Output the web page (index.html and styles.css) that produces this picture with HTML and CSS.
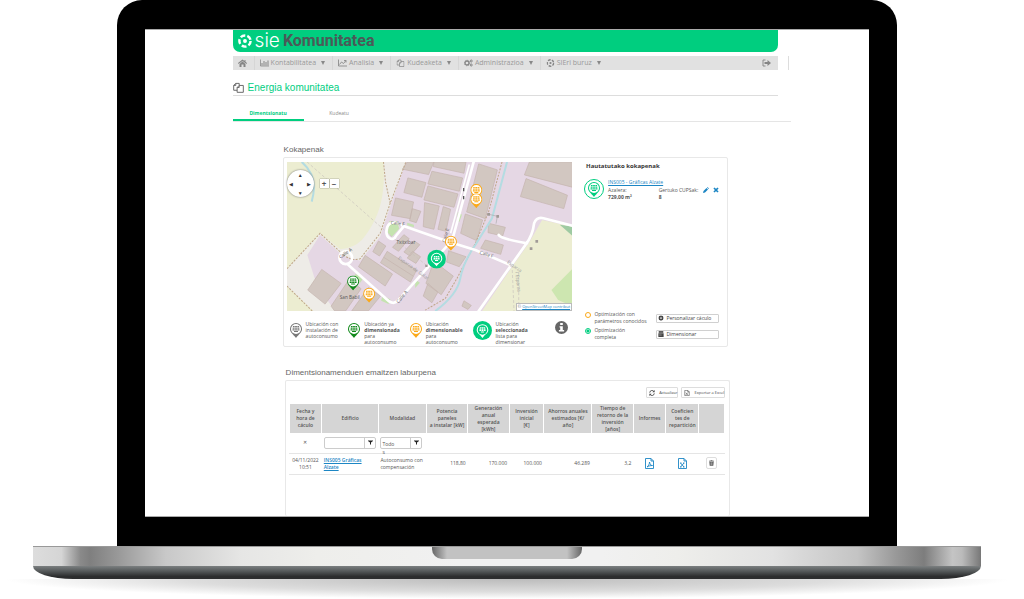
FILE: index.html
```html
<!DOCTYPE html>
<html lang="eu">
  <head>
    <meta charset="UTF-8" />
    <meta name="viewport" content="width=device-width, initial-scale=1" />
    <title>SIE Komunitatea</title>
    <link rel="stylesheet" href="styles.css" />
  </head>
  <body>
    <!-- shared icons -->
    <svg class="sprite" aria-hidden="true">
      <symbol id="i-pin" viewBox="0 0 24 30">
        <path d="M12 0a12 12 0 0 1 12 12c0 7-6 10-12 18C6 22 0 19 0 12A12 12 0 0 1 12 0z" fill="currentColor" />
        <circle cx="12" cy="12" r="10" fill="#fff" />
        <path d="M6 6h12l1 9H5zM8 16h8v2H8z" fill="currentColor" />
        <path d="M5 9h14M5 12h14M9.500 6v9M14.500 6v9" stroke="#fff" stroke-width="1" fill="none" />
      </symbol>
      <symbol id="i-pin-big" viewBox="0 0 36 36">
        <circle cx="18" cy="18" r="18" fill="currentColor" />
        <path d="M18 6a11 11 0 0 1 11 11c0 6-6 8-11 15C13 25 7 23 7 17A11 11 0 0 1 18 6z" fill="#fff" />
        <circle cx="18" cy="17" r="9" fill="currentColor" />
        <path d="M13 12h10l1 7H12zM15 20h6v2h-6z" fill="#fff" />
        <path d="M12 15h12M16 12v7M20 12v7" stroke="currentColor" fill="none" />
      </symbol>
      <symbol id="i-copy" viewBox="0 0 16 16">
        <path d="M6 12H1V5l3-3h5v3M1 5h3V2M6 8l3-3h6v10H6zM6 8h3V5" fill="none" stroke="currentColor" stroke-width="1.4" stroke-linejoin="round" />
      </symbol>
      <symbol id="i-filter" viewBox="0 0 10 10">
        <path d="M0 1h10v1L6 5v5L4 8V5L0 2z" fill="currentColor" />
      </symbol>
      <symbol id="i-ring" viewBox="0 0 20 20">
        <circle cx="10" cy="10" r="8" fill="none" stroke="currentColor" stroke-width="3.500" stroke-dasharray="7 3.050" />
        <circle cx="10" cy="10" r="2.800" fill="currentColor" />
      </symbol>
      <symbol id="i-gear" viewBox="0 0 16 16">
        <path d="M8 1v14M1 8h14M3 3l10 10M13 3L3 13" stroke="currentColor" stroke-width="3.200" />
        <circle cx="8" cy="8" r="4" fill="none" stroke="currentColor" stroke-width="3" />
        <circle cx="8" cy="8" r="2.300" fill="#fff" />
      </symbol>
    </svg>

    <div class="laptop">
      <div class="lid">
        <div class="screen">
          <header class="brand">
            <svg class="brand-icon"><use href="#i-ring" /></svg>
            <span class="brand-sie">sie</span>
            <span class="brand-name">Komunitatea</span>
          </header>

          <div class="menu-row">
            <nav class="menu">
              <a href="#" aria-label="Hasiera" class="home">
                <svg viewBox="0 0 18 16"><path d="M9 1l9 7-1 2-8-6-8 6-1-2zM13 2h2v4l-2-2zM9 5l6 5v6h-4v-5H7v5H3v-6z" fill="currentColor" /></svg>
              </a>
              <a href="#">
                <svg viewBox="0 0 18 16"><path d="M1 1v13h17" stroke="currentColor" stroke-width="1.500" fill="none" /><path d="M3 8h2v5H3zM7 4h2v9H7zM11 6h2v7h-2zM15 3h2v10h-2z" fill="currentColor" /></svg>
                Kontabilitatea <span class="caret"></span>
              </a>
              <a href="#">
                <svg viewBox="0 0 18 16"><path d="M1 1v13h17M3 11l4-5 4 3 5-6M12 3h4v4" stroke="currentColor" stroke-width="1.700" fill="none" /></svg>
                Analisia <span class="caret"></span>
              </a>
              <a href="#">
                <svg viewBox="0 0 16 16"><use href="#i-copy" /></svg>
                Kudeaketa <span class="caret"></span>
              </a>
              <a href="#">
                <svg viewBox="0 0 18 16">
                  <circle cx="6" cy="8" r="4" fill="none" stroke="currentColor" stroke-width="2.600" />
                  <circle cx="6" cy="8" r="5.500" fill="none" stroke="currentColor" stroke-width="1.500" stroke-dasharray="2.200 2.120" />
                  <circle cx="14.500" cy="4" r="2" fill="none" stroke="currentColor" stroke-width="2" />
                  <circle cx="14.500" cy="12" r="2" fill="none" stroke="currentColor" stroke-width="2" />
                </svg>
                Administrazioa <span class="caret"></span>
              </a>
              <a href="#">
                <svg viewBox="0 0 20 20"><use href="#i-ring" /></svg>
                SIEri buruz <span class="caret"></span>
              </a>
              <a href="#" class="logout" aria-label="Irten">
                <svg viewBox="0 0 18 16"><path d="M7 2H2v12h5" stroke="currentColor" stroke-width="1.800" fill="none" /><path d="M5 6h6V2l7 6-7 6v-4H5z" fill="currentColor" /></svg>
              </a>
            </nav>
            <span class="menu-end"></span>
          </div>

          <h1 class="page-title">
            <svg><use href="#i-copy" /></svg>
            Energia komunitatea
          </h1>

          <div class="tabs">
            <a href="#" class="tab active">Dimentsionatu</a>
            <a href="#" class="tab">Kudeatu</a>
          </div>

          <main class="content">
            <h2>Kokapenak</h2>
            <section class="card locations">
              <div class="map-col">
                <div class="map">
                  <svg class="map-canvas" viewBox="0 0 855 447" preserveAspectRatio="xMidYMid slice">
                    <rect width="855" height="447" fill="#e5d7e4" />
                    <path d="M0 0H356L309 134 279 224 219 296 165 280 99 219 61 279 89 369 144 447H0z" fill="#eeece7" />
                    <path d="M0 0H289C294 84 286 160 224 234Q200 258 160 262L99 214 0 320z" fill="#ecedd1" />
                    <path d="M0 372L80 447H0z" fill="#ecedd1" />
                    <path d="M764 174L855 194V447H584L674 314 724 244z" fill="#ecedd1" />
                    <path d="M792 384L855 320V432L812 414z" fill="#cde6b0" />
                    <path d="M817 188L855 194V222z" fill="#9fcaa2" />
                    <path d="M306 178h24l6 22-22 24-12-12zM360 182l20 6v8l-20-6zM205 336l24 12-10 14-22-14zM286 400l24 12-6 14-22-10zM384 352l14 10-14 16zM512 150l12 8-8 22-8-4z" fill="#c5e3b0" />

                    <!-- buildings -->
                    <g fill="#d2c7c1" stroke="#c4b4ad" stroke-width="2">
                      <path d="M360 0h80l-16 38-78-16zM440 0h96l-6 34-92-20zM434 28l92 20-10 40-94-22zM422 72l90 24-12 40-90-22zM362 48l54 14-12 44-54-14z" />
                      <path d="M325 108l54 12-10 50-56-10zM375 140l26 8-14 34-20-6zM412 122l44 10-16 70-32-8zM468 134l22 8-14 66-24-6z" />
                      <path d="M574 6l56 18-36 146-56-20zM534 156l52 18-18 62-48-22zM594 234l54 15-8 28-60-18zM604 184l50 12-8 26-44-10z" />
                      <path d="M726 0h129v76L711 39zM716 50l124 50-11 40-130-36z" />
                      <path d="M274 237l22 15-19 30-20-13zM350 218l16 12-32 38-18-12zM380 236l18 12-30 34-18-12zM376 268l24 16-14 20-26-16z" />
                      <path d="M234 280l82 56-22 36-80-58zM300 268l88 56-18 36-90-58zM290 286l88 56" />
                      <path d="M104 322l58 42-48 62-52-42zM186 352l36 28-46 66h-34l-10-14zM244 376l36 26-36 44h-50z" />
                      <path d="M484 266l52 18-20 30-38-14zM440 298l58 44-36 56-46-34zM422 364l30 26-18 32-26-20zM530 416l22 14-10 12-18-10z" />
                    </g>

                    <g fill="none" stroke="#bfa688" stroke-width="3" stroke-dasharray="6 4">
                      <path d="M0 320L99 214 160 270Q190 300 219 290L279 214 309 124 356 0M289 0l6 60 14 64" />
                      <path d="M644 0L604 149 564 244 509 349 474 409 414 444M0 372L76 447" />
                    </g>
                    <g fill="none" stroke="#c9c2bc" stroke-width="2" stroke-dasharray="9 6">
                      <path d="M60 0L330 238 430 320M674 309l6 138M694 330v117" />
                    </g>
                    <g fill="none" stroke="#b4dce2" stroke-width="6">
                      <path d="M44 0Q96 44 74 119M659 0L614 169 564 249Q528 300 519 349T444 447" />
                    </g>

                    <!-- roads -->
                    <g fill="none" stroke="#fff" stroke-width="8" stroke-linecap="round" stroke-linejoin="round">
                      <path d="M559 0L499 219 489 241 334 413Q322 428 306 418L184 309" />
                      <path d="M489 241L349 192Q310 170 300 196C290 230 320 240 326 222L349 194M489 241L564 264 669 309" />
                      <path d="M574 447L714 249Q736 220 740 184 748 164 768 169L855 191M634 219Q640 230 719 244" />
                      <circle cx="176" cy="287" r="19" />
                    </g>
                    <path d="M546 8L490 214" stroke="#fff" stroke-width="5" />
                    <path d="M604 157l26 6-4 22" fill="none" stroke="#aaa" stroke-width="2" />
                    <g fill="#a09a97">
                      <path d="M600 153h8v8h-8zM627 159h8v8h-8zM744 234h8v8h-8zM727 256h8v8h-8zM414 308h7v7h-7z" />
                    </g>

                    <g class="map-text">
                      <text x="310" y="186" transform="rotate(8 310 186)">Calle F</text>
                      <text x="328" y="246">Txitxibar</text>
                      <text x="160" y="290" transform="rotate(-35 160 290)">Calle A</text>
                      <text x="334" y="424" transform="rotate(-50 334 424)">Calle A</text>
                      <text x="576" y="276" transform="rotate(16 576 276)">Calle F</text>
                      <text x="158" y="410">San Babil</text>
                      <text class="faint" x="332" y="290" transform="rotate(36 332 290)">Esparza de Galar</text>
                      <text class="faint" x="658" y="302" transform="rotate(36 658 302)">Esparza</text>
                      <text class="faint" x="684" y="330" transform="rotate(84 684 330)">/ Esparza</text>
                      <text x="475" y="242" transform="rotate(-76 475 242)">Calle E</text>
                    </g>
                    <path d="M529 78v10M529 102v10" stroke="#555" stroke-width="4" />

                    <g class="orange">
                      <use href="#i-pin" x="549" y="66" width="36" height="45" />
                      <use href="#i-pin" x="549" y="94" width="36" height="45" />
                      <use href="#i-pin" x="473" y="221" width="36" height="45" />
                      <use href="#i-pin" x="228" y="377" width="36" height="45" />
                    </g>
                    <use href="#i-pin" class="green" x="180" y="340" width="36" height="45" />
                    <use href="#i-pin-big" class="mint" x="420" y="262" width="56" height="58" />
                  </svg>

                  <div class="pan">
                    <button class="pan-up" aria-label="Gora">▲</button>
                    <button class="pan-left" aria-label="Ezkerrera">◀</button>
                    <button class="pan-right" aria-label="Eskuinera">▶</button>
                    <button class="pan-down" aria-label="Behera">▼</button>
                  </div>
                  <div class="map-zoom">
                    <button>+</button>
                    <button>−</button>
                  </div>
                  <div class="credit">© <a href="#">OpenStreetMap contribut</a></div>
                </div>

                <div class="legend">
                  <div class="legend-item"><svg class="pin grey"><use href="#i-pin" /></svg><p>Ubicación con<br />instalación de<br />autoconsumo</p></div>
                  <div class="legend-item"><svg class="pin green"><use href="#i-pin" /></svg><p>Ubicación ya<br /><b>dimensionada</b><br />para<br />autoconsumo</p></div>
                  <div class="legend-item"><svg class="pin orange"><use href="#i-pin" /></svg><p>Ubicación<br /><b>dimensionable</b><br />para<br />autoconsumo</p></div>
                  <div class="legend-item"><svg class="pin-big mint"><use href="#i-pin-big" /></svg><p>Ubicación<br /><b>seleccionada</b><br />lista para<br />dimensionar</p></div>
                  <button class="info" aria-label="Informazioa">
                    <svg viewBox="0 0 20 20"><circle cx="10" cy="10" r="10" fill="#666" /><path d="M8 3h4v3H8zM7 8h5v6h2v2H6v-2h2v-4H7z" fill="#fff" /></svg>
                  </button>
                </div>
              </div>

              <div class="side">
                <h3>Hautatutako kokapenak</h3>
                <div class="place">
                  <span class="place-icon mint"><svg><use href="#i-pin" /></svg></span>
                  <div class="place-info">
                    <a href="#">INS005 - Gráficas Alzate</a>
                    <div class="place-data">
                      <p>Azalera:<br /><b>729,00 m²</b></p>
                      <p>Gertuko CUPSak:<br /><b>8</b></p>
                      <button class="tool" aria-label="Editatu"><svg viewBox="0 0 12 12"><path d="M0 12l1-4 6-6 3 3-6 6zM8 1l1-1 3 3-1 1z" fill="currentColor" /></svg></button>
                      <button class="tool" aria-label="Kendu"><svg viewBox="0 0 12 12"><path d="M2 2l8 8M10 2l-8 8" stroke="currentColor" stroke-width="3.500" /></svg></button>
                    </div>
                  </div>
                </div>
                <form class="options">
                  <label><input type="radio" name="opt" /><span>Optimización con parámetros conocidos</span></label>
                  <button type="button" class="btn"><svg><use href="#i-gear" /></svg>Personalizar cáculo</button>
                  <label><input type="radio" name="opt" checked /><span>Optimización<br />completa</span></label>
                  <button type="button" class="btn"><svg viewBox="0 0 16 16"><path d="M2 0h12v5H2zM1 6h14v10H1z" fill="currentColor" /><path d="M3 3h10M4 9h2M7 9h2M4 12h2M7 12h2" stroke="#fff" /></svg>Dimensionar</button>
                </form>
              </div>
            </section>

            <div class="results-block">
              <h2>Dimentsionamenduen emaitzen laburpena</h2>
              <section class="card results">
                <div class="toolbar">
                  <button class="btn small"><svg viewBox="0 0 16 16"><path d="M2 7a6 6 0 0 1 11-3M14 9a6 6 0 0 1-11 3" fill="none" stroke="currentColor" stroke-width="2.500" /><path d="M15 0v6H9zM1 16v-6h6z" fill="currentColor" /></svg>Actualizar</button>
                  <button class="btn small"><svg viewBox="0 0 16 16"><path d="M2 1h8l4 4v10H2zM10 1v4h4M5 7l5 6M10 7l-5 6" fill="none" stroke="currentColor" stroke-width="1.500" /></svg>Exportar a Excel</button>
                </div>
                <table>
                  <colgroup>
                    <col class="c-date" /><col class="c-building" /><col class="c-mode" /><col class="c-num" /><col class="c-num" /><col class="c-cost" /><col class="c-saving" /><col class="c-num" /><col class="c-file" /><col class="c-file" /><col />
                  </colgroup>
                  <thead>
                    <tr>
                      <th>Fecha y<br />hora de<br />cáculo</th>
                      <th>Edificio</th>
                      <th>Modalidad</th>
                      <th>Potencia<br />paneles<br />a instalar [kW]</th>
                      <th>Generación<br />anual<br />esperada<br />[kWh]</th>
                      <th>Inversión<br />inicial<br />[€]</th>
                      <th>Ahorros anuales<br />estimados [€/<br />año]</th>
                      <th>Tiempo de<br />retorno de la<br />inversión<br />[años]</th>
                      <th>Informes</th>
                      <th>Coeficien<br />tes de<br />repartición</th>
                      <th></th>
                    </tr>
                  </thead>
                  <tbody>
                    <tr class="filters">
                      <td class="center"><button class="clear" aria-label="Garbitu">✕</button></td>
                      <td>
                        <div class="filter">
                          <input type="text" aria-label="Edificio" />
                          <button aria-label="Iragazi"><svg><use href="#i-filter" /></svg></button>
                        </div>
                      </td>
                      <td>
                        <div class="filter narrow">
                          <button class="filter-value" aria-haspopup="listbox">Todo<br />s</button>
                          <button aria-label="Iragazi"><svg><use href="#i-filter" /></svg></button>
                        </div>
                      </td>
                      <td colspan="8"></td>
                    </tr>
                    <tr class="data">
                      <td class="center">04/11/2022 10:51</td>
                      <td><a href="#">INS005 Gráficas Alzate</a></td>
                      <td>Autoconsumo con compensación</td>
                      <td class="num">118,80</td>
                      <td class="num">170.000</td>
                      <td class="num">100.000</td>
                      <td class="num">46.289</td>
                      <td class="num">3,2</td>
                      <td class="center">
                        <a href="#" aria-label="PDF"><svg class="file" viewBox="0 0 18 22"><path d="M1 1h11l5 5v15H1zM12 1v5h5M4 18c3-2 5-6 5-10 1 5 3 7 6 7-4 0-8 1-11 3z" fill="none" stroke="currentColor" stroke-width="1.800" /></svg></a>
                      </td>
                      <td class="center">
                        <a href="#" aria-label="Excel"><svg class="file" viewBox="0 0 18 22"><path d="M1 1h11l5 5v15H1zM12 1v5h5M5 10l7 8M12 10l-7 8M4 10h3M10 10h3M4 18h3M10 18h3" fill="none" stroke="currentColor" stroke-width="1.800" /></svg></a>
                      </td>
                      <td class="center">
                        <button class="trash" aria-label="Ezabatu"><svg viewBox="0 0 14 16"><path d="M0 2h4l1-2h4l1 2h4v2H0zM1 5h12l-1 11H2z" fill="currentColor" /><path d="M5 6v8M7 6v8M9 6v8" stroke="#fff" stroke-width=".8" /></svg></button>
                      </td>
                    </tr>
                  </tbody>
                </table>
              </section>
            </div>
          </main>
        </div>
      </div>

      <div class="base">
        <div class="base-top"><div class="notch"></div></div>
        <div class="base-bottom"></div>
      </div>
      <div class="shadow"></div>
    </div>
  </body>
</html>
```
FILE: styles.css
```css
* {
  box-sizing: border-box;
}
body {
  margin: 0;
  background: #fff;
  color: #555;
  font-family: "Open Sans", "Noto Sans", sans-serif;
  font-size: 5px;
  line-height: 6px;
}
h1,
h2,
h3,
p {
  margin: 0;
}
button {
  padding: 0;
  border: none;
  background: none;
  color: inherit;
  font: inherit;
  cursor: pointer;
}
a {
  color: #1c86c4;
}
svg {
  display: block;
}
.sprite {
  position: absolute;
  width: 0;
  height: 0;
}
.grey {
  color: #777;
}
.green {
  color: #128a1c;
}
.orange {
  color: #fba919;
}
.mint {
  color: #00ce7f;
}

/* laptop */
.laptop {
  padding-right: 10px;
  overflow: hidden;
}
.lid {
  width: 77%;
  margin: 0 auto;
  padding: 29px 28px;
  background: #000;
  border-radius: 25px 25px 0 0;
}
.screen {
  min-height: 488px;
  padding: 0 78px 0 88px;
  background: #fff;
  border: 1px solid #aaa;
  border-width: 1px 0;
}
.base {
  width: 93.5%;
  margin: 0 auto;
}
.base-top {
  height: 20px;
  border-top: 1px solid #999;
  background: linear-gradient(90deg, #ddd 0%, #d5d5d5 3%, #8a8a8a 5%, #7f7f7f 6%, #999 9%, #c8c8c8 14%, #e6e6e5 22%, #eeeeeb 30%, #f1f1f1 45%, #f1f1f1 60%, #eeeeeb 68%, #e2e2e2 78%, #c4c4c4 87%, #999 91%, #7d7d7d 94%, #c4c4c4 97%, #bbb 98%, #777 100%);
}
.notch {
  width: 150px;
  height: 12px;
  margin: 0 auto;
  border-radius: 0 0 10px 10px;
  background: linear-gradient(90deg, #666, #c2c2c2 10%, #c2c2c2 90%, #666);
}
.base-bottom {
  height: 13px;
  border-radius: 0 0 40px 40px / 0 0 13px 13px;
  background: linear-gradient(#7b7f80, #55595a 40%, #2c2d2e 80%);
}
.shadow {
  height: 20px;
  background: radial-gradient(ellipse at 50% 0, #bbb 0%, #ddd 45%, #fff 70%);
}

/* header */
.brand {
  display: flex;
  align-items: center;
  height: 22px;
  margin-right: 13px;
  padding-left: 5px;
  background: #00ce7f;
  border-radius: 0 0 7px 7px;
  color: #fff;
}
.brand-icon {
  width: 14px;
  height: 14px;
  margin-right: 3px;
}
.brand-sie {
  margin-right: 3px;
  font-family: Inter, sans-serif;
  font-size: 19px;
  font-weight: 300;
  line-height: 20px;
}
.brand-name {
  color: #4a5a58;
  font-family: Roboto, sans-serif;
  font-size: 16px;
  font-weight: 700;
  line-height: 20px;
}
.menu-row {
  display: flex;
  margin-top: 4px;
}
.menu {
  display: flex;
  flex: 1;
  height: 14px;
  background: #e1e1e1;
}
.menu a {
  display: flex;
  align-items: center;
  gap: 2px;
  padding: 0 7px 0 5px;
  border-left: 1px solid #d6d6d6;
  color: #999;
  font-size: 7px;
  line-height: 14px;
  text-decoration: none;
}
.menu a.home {
  border-left: none;
}
.menu a.logout {
  margin-left: auto;
  border-left: none;
}
.menu svg {
  width: 9px;
  height: 8px;
  color: #858585;
}
.caret {
  margin-left: 3px;
  border: 2px solid transparent;
  border-top: 4px solid #888;
  border-bottom: none;
}
.menu-end {
  width: 1px;
  margin: 0 2px 0 10px;
  background: #ddd;
}
.page-title {
  display: flex;
  align-items: center;
  gap: 4px;
  height: 16px;
  margin: 10px 13px 0 0;
  border-bottom: 1px solid #ddd;
  color: #00ce7f;
  font-family: "Liberation Sans", sans-serif;
  font-size: 10px;
  font-weight: 400;
}
.page-title svg {
  width: 11px;
  height: 11px;
  color: #666;
}
.tabs {
  display: flex;
  margin-top: 10px;
  border-bottom: 1px solid #e5e5e5;
}
.tab {
  width: 71px;
  height: 15px;
  line-height: 15px;
  color: #888;
  text-align: center;
  text-decoration: none;
}
.tab.active {
  border-bottom: 2px solid #00ce7f;
  color: #00ce7f;
  font-weight: 700;
}

/* content */
.content {
  padding: 0 63px 0 50px;
}
h2 {
  margin: 20px 0 0 1px;
  color: #666;
  font-family: "Liberation Sans", sans-serif;
  font-size: 8px;
  font-weight: 400;
  line-height: 15px;
}
.card {
  border: 1px solid #e8e8e8;
  border-radius: 2px;
}
.locations {
  display: grid;
  grid-template-columns: minmax(0, 15fr) minmax(0, 8fr);
  padding: 4px 3px 0 3px;
}
.map {
  position: relative;
}
.map-canvas {
  width: 100%;
  height: 149px;
}
.map-text {
  fill: #555;
  font-size: 14px;
}
.faint {
  fill: #999;
}
.pan {
  position: absolute;
  top: 8px;
  left: 0;
  display: grid;
  grid-template: "a up b" 9px "left c right" 9px "d down e" 9px / 9px 9px 9px;
  border-radius: 50%;
  background: #fff;
  box-shadow: 0 0 2px #666;
  color: #333;
}
.pan-up {
  grid-area: up;
}
.pan-left {
  grid-area: left;
}
.pan-right {
  grid-area: right;
}
.pan-down {
  grid-area: down;
}
.map-zoom {
  position: absolute;
  top: 17px;
  left: 33px;
  display: flex;
  gap: 1px;
}
.map-zoom button {
  width: 9px;
  height: 9px;
  background: #fff;
  box-shadow: 0 0 1px #555;
  font-size: 8px;
  font-weight: 700;
  line-height: 8px;
}
.credit {
  position: absolute;
  right: 0;
  bottom: 0;
  height: 8px;
  padding: 0 1px;
  background: #fff;
  border: 1px solid #bbb;
  font-size: 4px;
  white-space: nowrap;
}
.legend {
  display: flex;
  gap: 10px;
  padding: 10px 4px 1px 3px;
}
.legend-item {
  display: flex;
  gap: 4px;
}
.pin {
  width: 12px;
  height: 15px;
  margin-top: 2px;
}
.pin-big {
  width: 19px;
  height: 19px;
}
.info {
  align-self: flex-start;
  margin-left: auto;
}
.info svg {
  width: 13px;
  height: 13px;
}
.side {
  display: flex;
  flex-direction: column;
  padding: 0 5px 5px 12px;
}
h3 {
  margin-left: 2px;
  color: #333;
  font-size: 6px;
  line-height: 8px;
}
.place {
  display: flex;
  gap: 4px;
  margin-top: 9px;
}
.place-icon {
  display: flex;
  flex: none;
  align-items: center;
  justify-content: center;
  width: 20px;
  height: 20px;
  border: 1px solid;
  border-radius: 50%;
}
.place-icon svg {
  width: 12px;
  height: 15px;
}
.place-info {
  flex: 1;
  line-height: 7px;
}
.place-info > a {
  display: block;
}
.place-data {
  display: flex;
  justify-content: space-between;
  margin-top: 1px;
}
.place-data p:first-child {
  width: 46px;
}
.tool {
  align-self: flex-start;
  color: #1c86c4;
}
.tool svg {
  width: 6px;
  height: 6px;
}
.options {
  display: grid;
  grid-template-columns: 62px 63px;
  align-items: center;
  justify-content: end;
  gap: 2px 9px;
  margin-top: auto;
}
.options label {
  display: flex;
  gap: 3px;
  line-height: 7px;
}
input[type="radio"] {
  flex: none;
  width: 6px;
  height: 6px;
  margin: 1px 0 0;
  appearance: none;
  border: 1px solid #fba919;
  border-radius: 50%;
}
input[type="radio"]:checked {
  border-color: #00ce7f;
  background: radial-gradient(#00ce7f 50%, #fff 60%);
}
.btn {
  display: flex;
  align-items: center;
  gap: 2px;
  height: 9px;
  padding: 0 1px;
  border: 1px solid #d0d0d0;
  border-radius: 1px;
  color: #444;
  white-space: nowrap;
}
.btn svg {
  width: 6px;
  height: 6px;
}

/* results */
.results-block {
  margin: 18px -2px 0 2px;
}
.results-block h2 {
  margin-top: 0;
}
.results {
  min-height: 136px;
  padding: 6px 4px 0 3px;
  border-bottom: none;
}
.toolbar {
  display: flex;
  justify-content: flex-end;
  gap: 3px;
  margin-bottom: 6px;
}
.btn.small {
  gap: 4px;
  height: 11px;
  padding: 0 0 0 2px;
  border-color: #ddd;
  font-size: 4px;
}
table {
  width: 100%;
  table-layout: fixed;
  border-collapse: collapse;
}
.c-date,
.c-file {
  width: 7.5%;
}
.c-building {
  width: 13%;
}
.c-mode {
  width: 11%;
}
.c-num {
  width: 9.5%;
}
.c-cost {
  width: 8%;
}
.c-saving {
  width: 11%;
}
th {
  height: 29px;
  padding: 0;
  background: #d5d5d5;
  border: 1px solid #fff;
  border-width: 0 1px;
  font-weight: 600;
  line-height: 7px;
}
td {
  padding: 0 2px;
  border-bottom: 1px solid #e5e5e5;
  line-height: 7px;
}
.filters td {
  height: 20px;
}
.data td {
  height: 21px;
}
.center {
  padding: 0;
  text-align: center;
}
.num {
  text-align: right;
}
.data a {
  font-weight: 600;
}
.filter {
  display: flex;
  height: 12px;
  border: 1px solid #ccc;
  border-radius: 2px;
}
.filter.narrow {
  width: 42px;
}
.filter input {
  flex: 1;
  min-width: 0;
  padding: 0 2px;
  border: none;
  background: none;
  font: inherit;
}
.filter button {
  flex: none;
  width: 11px;
  border-left: 1px solid #ccc;
}
.filter button.filter-value {
  align-self: flex-start;
  flex: 1;
  height: 10px;
  padding: 2px 1px 0;
  border: none;
  line-height: 8px;
  text-align: left;
}
.filter svg {
  width: 5px;
  height: 5px;
  margin: 0 auto;
  color: #222;
}
.file {
  width: 9px;
  height: 11px;
  margin: 0 auto;
}
.trash {
  width: 11px;
  height: 12px;
  border: 1px solid #ddd;
  border-radius: 2px;
}
.trash svg {
  width: 5px;
  height: 6px;
  margin: 0 auto;
}
```
